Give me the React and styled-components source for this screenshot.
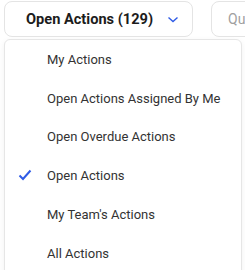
import React from 'react'
import styled, { createGlobalStyle } from 'styled-components'

const GlobalStyle = createGlobalStyle`
  body {
    margin: 0;
    background: #fff;
    font-family: Roboto, "Liberation Sans", sans-serif;
  }
`

const Page = styled.div`
  width: 245px;
  height: 270px;
  overflow: hidden;
  padding: 1px 0 0 4px;
  box-sizing: border-box;
`

const TopBar = styled.div`
  display: flex;
  gap: 18px;
`

const Trigger = styled.button`
  width: 189px;
  height: 36px;
  flex-shrink: 0;
  display: flex;
  align-items: center;
  gap: 14px;
  padding: 0 0 0 21px;
  box-sizing: border-box;
  border: 1px solid #e4e4e4;
  border-radius: 8px;
  background: #fff;
  font-family: inherit;
  font-size: 14.6px;
  font-weight: 700;
  color: #1c1c1c;
  white-space: nowrap;
`

const Search = styled.div`
  width: 60px;
  height: 36px;
  flex-shrink: 0;
  display: flex;
  align-items: center;
  padding-left: 16px;
  box-sizing: border-box;
  border: 1px solid #e4e4e4;
  border-radius: 8px;
  font-size: 14px;
  color: #a0a0a0;
`

const Menu = styled.ul`
  list-style: none;
  margin: 2px 0 0;
  padding: 0;
  width: 238px;
  height: 240px;
  box-sizing: border-box;
  border: 1px solid #e6e6e6;
  border-radius: 6px;
  background: #fff;
  box-shadow: 0 2px 6px rgba(0, 0, 0, 0.06);
`

const Item = styled.li`
  height: 38.8px;
  display: flex;
  align-items: center;
  padding-left: 42px;
  position: relative;
  font-size: 13px;
  color: #333;
`

const Check = styled.svg`
  position: absolute;
  left: 13px;
  top: 13px;
`

const items = [
  'My Actions',
  'Open Actions Assigned By Me',
  'Open Overdue Actions',
  'Open Actions',
  "My Team's Actions",
  'All Actions',
]

export default function App() {
  return (
    <Page>
      <GlobalStyle />
      <TopBar>
        <Trigger>
          Open Actions (129)
          <svg width="12" height="12" viewBox="0 0 12 12">
            <path d="M1.5 4.5 L6 8.5 L10.5 4.5" fill="none" stroke="#2f5be6" strokeWidth="1.4" />
          </svg>
        </Trigger>
        <Search>Qu</Search>
      </TopBar>
      <Menu>
        {items.map(label => (
          <Item key={label}>
            {label === 'Open Actions' && (
              <Check width="14" height="12" viewBox="0 0 14 12">
                <path d="M1.5 6.5 L5 10 L12.5 1.5" fill="none" stroke="#2f5be6" strokeWidth="2" />
              </Check>
            )}
            {label}
          </Item>
        ))}
      </Menu>
    </Page>
  )
}
